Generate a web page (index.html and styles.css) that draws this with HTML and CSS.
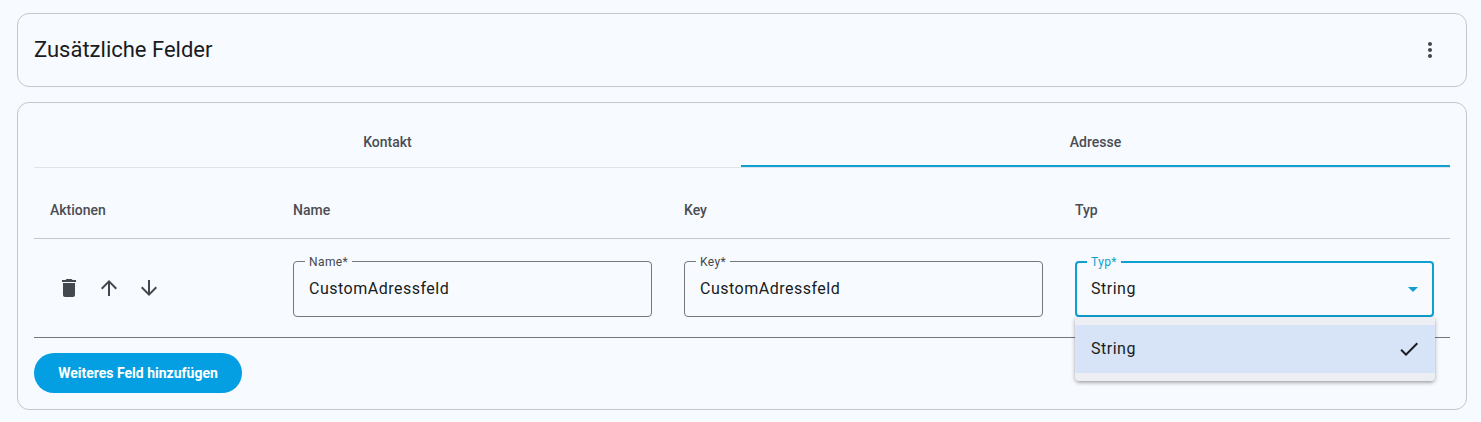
FILE: index.html
```html
<!DOCTYPE html>
<html lang="de">
<head>
<meta charset="utf-8">
<title>Zusätzliche Felder</title>
<link rel="stylesheet" href="styles.css">
</head>
<body>
<main class="page">
  <section class="card header-card">
    <h1 class="title">Zusätzliche Felder</h1>
    <button class="icon-btn more" aria-label="Mehr">
      <svg viewBox="0 0 24 24" width="24" height="24"><path d="M12 8c1.1 0 2-.9 2-2s-.9-2-2-2-2 .9-2 2 .9 2 2 2zm0 2c-1.1 0-2 .9-2 2s.9 2 2 2 2-.9 2-2-.9-2-2-2zm0 6c-1.1 0-2 .9-2 2s.9 2 2 2 2-.9 2-2-.9-2-2-2z"/></svg>
    </button>
  </section>
  <section class="card body-card">
    <div class="tabs">
      <div class="tab">Kontakt</div>
      <div class="tab active">Adresse</div>
    </div>
    <div class="grid head">
      <div class="cell">Aktionen</div>
      <div class="cell">Name</div>
      <div class="cell">Key</div>
      <div class="cell">Typ</div>
    </div>
    <div class="grid row">
      <div class="cell actions">
        <button class="icon-btn" aria-label="Löschen"><svg viewBox="0 0 24 24" width="24" height="24"><path d="M6 19c0 1.100.9 2 2 2h8c1.100 0 2-.9 2-2V7H6v12zM19 4h-3.500l-1-1h-5l-1 1H5v2h14V4z"/></svg></button>
        <button class="icon-btn" aria-label="Nach oben"><svg viewBox="0 0 24 24" width="24" height="24"><path d="M4 12l1.410 1.410L11 7.830V20h2V7.830l5.580 5.590L20 12l-8-8-8 8z"/></svg></button>
        <button class="icon-btn" aria-label="Nach unten"><svg viewBox="0 0 24 24" width="24" height="24"><path d="M20 12l-1.410-1.410L13 16.170V4h-2v12.170l-5.580-5.590L4 12l8 8 8-8z"/></svg></button>
      </div>
      <div class="cell">
        <div class="field"><span class="label">Name*</span><span class="value">CustomAdressfeld</span></div>
      </div>
      <div class="cell">
        <div class="field"><span class="label">Key*</span><span class="value">CustomAdressfeld</span></div>
      </div>
      <div class="cell">
        <div class="field focused"><span class="label">Typ*</span><span class="value">String</span><span class="caret"></span>
          <div class="menu">
            <div class="option"><span class="option-text">String</span>
              <svg viewBox="0 0 24 24" width="24" height="24"><path d="M9 16.170L4.830 12l-1.420 1.410L9 19 21 7l-1.410-1.410z"/></svg>
            </div>
          </div>
        </div>
      </div>
    </div>
    <button class="add-btn">Weiteres Feld hinzufügen</button>
  </section>
</main>
</body>
</html>
```
FILE: styles.css
```css
* { box-sizing: border-box; }
html, body { margin: 0; height: 100%; }
body {
  background: #f7faff;
  color: #191c20;
  font-family: Roboto, "Liberation Sans", sans-serif;
  overflow: hidden;
}
.page {
  padding: 13px 14px 0 17px;
  display: flex;
  flex-direction: column;
  gap: 15px;
}
.card {
  border: 1px solid #c3c7cf;
  border-radius: 12px;
}
.header-card {
  height: 74px;
  display: flex;
  align-items: center;
  justify-content: space-between;
  padding: 0 16px;
}
.title {
  margin: 0;
  font-size: 22px;
  font-weight: 400;
  line-height: 28px;
}
.icon-btn {
  width: 40px;
  height: 40px;
  padding: 0;
  border: 0;
  background: none;
  display: flex;
  align-items: center;
  justify-content: center;
  fill: #43474e;
}
.body-card {
  height: 308px;
  padding: 16px 16px 0;
}
.tabs {
  display: grid;
  grid-template-columns: 707px 1fr;
  border-bottom: 1px solid #dfe3eb;
  height: 49px;
}
.tab {
  display: flex;
  align-items: center;
  justify-content: center;
  font-size: 14px;
  font-weight: 500;
  color: #4a4d53;
  height: 48px;
  padding-bottom: 2px;
}
.tab.active {
  border-bottom: 2px solid #0f9fd0;
  padding-bottom: 0;
}
.grid {
  display: grid;
  grid-template-columns: 243px 391px 391px 1fr;
}
.head {
  height: 71px;
  padding-top: 14px;
  border-bottom: 1px solid #c3c7cf;
  font-size: 14px;
  font-weight: 500;
  color: #4a4d53;
  align-items: center;
}
.head .cell { padding: 0 16px; }
.row {
  height: 99px;
  border-bottom: 1px solid #73777f;
  align-items: center;
}
.row .cell { padding: 0 16px; }
.row .actions {
  display: flex;
  align-items: center;
  padding-left: 15px;
}
.field {
  position: relative;
  height: 56px;
  margin-top: 2px;
  padding: 0 15px 2px;
  border: 1px solid #73777f;
  border-radius: 4px;
  display: flex;
  align-items: center;
  font-size: 16px;
  letter-spacing: 0.5px;
}
.label {
  position: absolute;
  top: -8px;
  left: 11px;
  padding: 0 4px;
  background: #f7faff;
  font-size: 12px;
  line-height: 16px;
  letter-spacing: 0.4px;
  color: #43474e;
}
.value { color: #191c20; }
.focused { border: 2px solid #0f9fd0; padding: 0 14px 2px; }
.focused .label { color: #0f9fd0; top: -9px; left: 10px; }
.caret {
  position: absolute;
  right: 14px;
  top: 24px;
  width: 0;
  height: 0;
  border-left: 5px solid transparent;
  border-right: 5px solid transparent;
  border-top: 5px solid #0f9fd0;
}
.menu {
  position: absolute;
  top: 54px;
  left: -2px;
  right: -3px;
  height: 64px;
  padding: 8px 0;
  background: #eceef4;
  border-radius: 0 0 4px 4px;
  box-shadow: 0 2px 4px -1px rgba(0,0,0,.35), 0 1px 5px rgba(0,0,0,.15);
  letter-spacing: 0.5px;
  z-index: 2;
}
.option {
  height: 48px;
  background: #d7e3f6;
  display: flex;
  align-items: center;
  justify-content: space-between;
  padding: 0 14px 0 16px;
  color: #191c20;
}
.option-text { margin-bottom: 2px; }
.option svg { fill: #191c20; }
.add-btn {
  display: block;
  margin-top: 15px;
  width: 208px;
  height: 40px;
  border: 0;
  border-radius: 20px;
  background: #049fe2;
  color: #fff;
  font-family: inherit;
  font-size: 14px;
  font-weight: 700;
  text-align: center;
  padding: 0;
}
```
